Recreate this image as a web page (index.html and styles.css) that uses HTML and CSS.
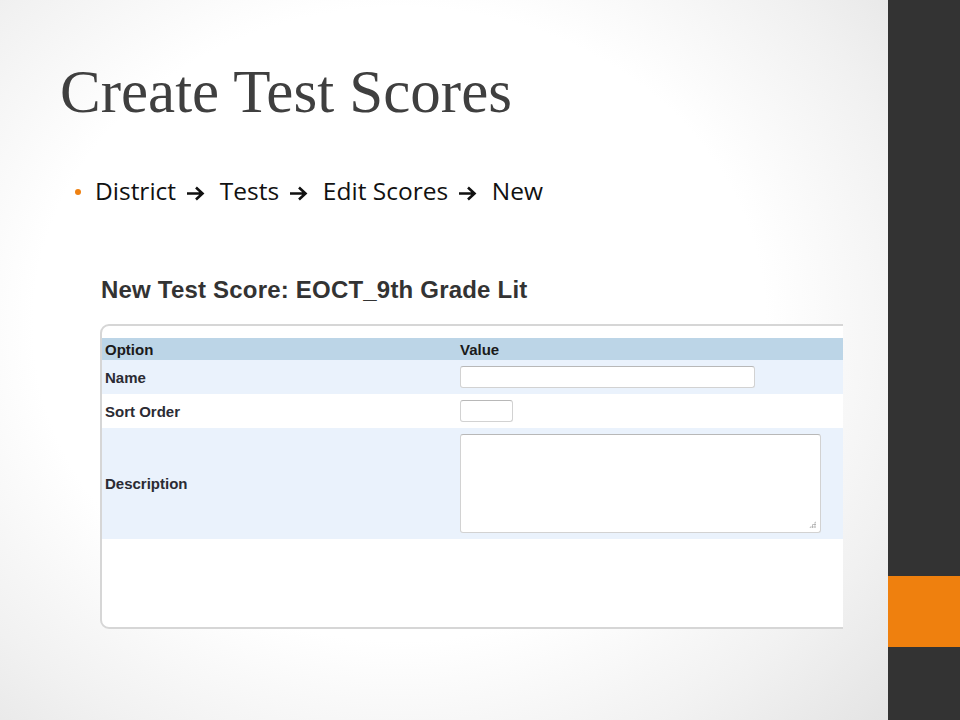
FILE: index.html
```html
<!DOCTYPE html>
<html lang="en">
<head>
    <meta charset="UTF-8">
    <title>Create Test Scores</title>
    <link rel="stylesheet" href="styles.css">
</head>
<body>
    <div class="slide">
        <main class="content">
            <h1 class="title">Create Test Scores</h1>

            <ul class="bullets">
                <li>
                    District
                    <svg class="arrow" viewBox="0 0 19 15"><path d="M1 7.5h16M10 1.5l6.5 6-6.5 6"/></svg>
                    Tests
                    <svg class="arrow" viewBox="0 0 19 15"><path d="M1 7.5h16M10 1.5l6.5 6-6.5 6"/></svg>
                    Edit Scores
                    <svg class="arrow" viewBox="0 0 19 15"><path d="M1 7.5h16M10 1.5l6.5 6-6.5 6"/></svg>
                    New
                </li>
            </ul>

            <!-- screenshot of the form -->
            <div class="shot">
                <h2 class="shot-title">New Test Score: EOCT_9th Grade Lit</h2>
                <div class="shot-clip">
                    <div class="panel">
                        <table class="grid">
                            <tr class="head">
                                <th class="col-opt">Option</th>
                                <th>Value</th>
                            </tr>
                            <tr class="alt">
                                <td>Name</td>
                                <td><div class="field field-name"></div></td>
                            </tr>
                            <tr>
                                <td>Sort Order</td>
                                <td><div class="field field-sort"></div></td>
                            </tr>
                            <tr class="alt">
                                <td>Description</td>
                                <td><div class="field field-desc"><span class="grip"></span></div></td>
                            </tr>
                        </table>
                    </div>
                </div>
            </div>
        </main>

        <aside class="sidebar">
            <div class="accent"></div>
        </aside>
    </div>
</body>
</html>
```

FILE: styles.css
```css
* {
    margin: 0;
    padding: 0;
    box-sizing: border-box;
}

body {
    width: 960px;
    height: 720px;
    overflow: hidden;
    font-family: 'Liberation Sans', Arial, sans-serif;
}

.slide {
    display: flex;
    width: 960px;
    height: 720px;
}

.content {
    flex: 1;
    padding: 52px 0 0 60px;
    background: radial-gradient(ellipse 75% 80% at 45% 45%, #ffffff 55%, #f1f1f1 80%, #e4e4e4 100%);
}

.title {
    font-family: 'Liberation Serif', 'Times New Roman', serif;
    font-weight: normal;
    font-size: 61px;
    line-height: 80px;
    color: #3f3f3f;
}

/* bullet line */
.bullets {
    list-style: none;
    margin-top: 43px;
    padding-left: 15px;
}

.bullets li {
    position: relative;
    padding-left: 20px;
    font-family: 'Open Sans', 'Liberation Sans', sans-serif;
    font-size: 24.5px;
    line-height: 32px;
    color: #111;
}

.bullets li::before {
    content: "";
    position: absolute;
    left: 0;
    top: 14px;
    width: 6px;
    height: 6px;
    border-radius: 50%;
    background: #ef8111;
}

.arrow {
    width: 19px;
    height: 15px;
    margin: 0 8px 0 4px;
    vertical-align: -1px;
    fill: none;
    stroke: #111;
    stroke-width: 2.6;
}

/* form screenshot */
.shot {
    margin-top: 69px;
    margin-left: 40px;
}

.shot-title {
    font-size: 24px;
    font-weight: bold;
    color: #333;
    line-height: 28px;
    padding-left: 1px;
    letter-spacing: 0.2px;
}

.shot-clip {
    width: 743px;
    overflow: hidden;
    margin-top: 20px;
}

.panel {
    width: 800px;
    height: 305px;
    border: 2px solid #d6d6d6;
    border-radius: 9px;
    padding-top: 12px;
    background: #fff;
}

.grid {
    width: 100%;
    border-collapse: collapse;
    font-size: 15px;
    font-weight: bold;
    color: #2b2b33;
}

.grid th,
.grid td {
    text-align: left;
    padding: 0 0 0 3px;
}

.head th {
    height: 22px;
    background: #bcd5e7;
    color: #1a1a1a;
}

.col-opt {
    width: 355px;
}

.grid td {
    height: 34px;
}

.grid tr.alt td {
    background: #eaf2fc;
}

.grid tr:last-child td {
    height: 111px;
}

.field {
    background: #fff;
    border: 1px solid #d2d2d2;
    border-top-color: #b8b8b8;
    border-radius: 3px;
}

.field-name {
    width: 295px;
    height: 22px;
}

.field-sort {
    width: 53px;
    height: 22px;
}

.field-desc {
    position: relative;
    width: 361px;
    height: 99px;
}

.grip {
    position: absolute;
    right: 4px;
    bottom: 4px;
    width: 7px;
    height: 7px;
    background: radial-gradient(circle, #999 0.7px, transparent 1px) 0 0 / 2.4px 2.4px;
    clip-path: polygon(100% 0, 100% 100%, 0 100%);
}

/* right rail */
.sidebar {
    width: 72px;
    background: #333333;
    padding-top: 576px;
}

.accent {
    height: 71px;
    background: #ef800e;
}
```
